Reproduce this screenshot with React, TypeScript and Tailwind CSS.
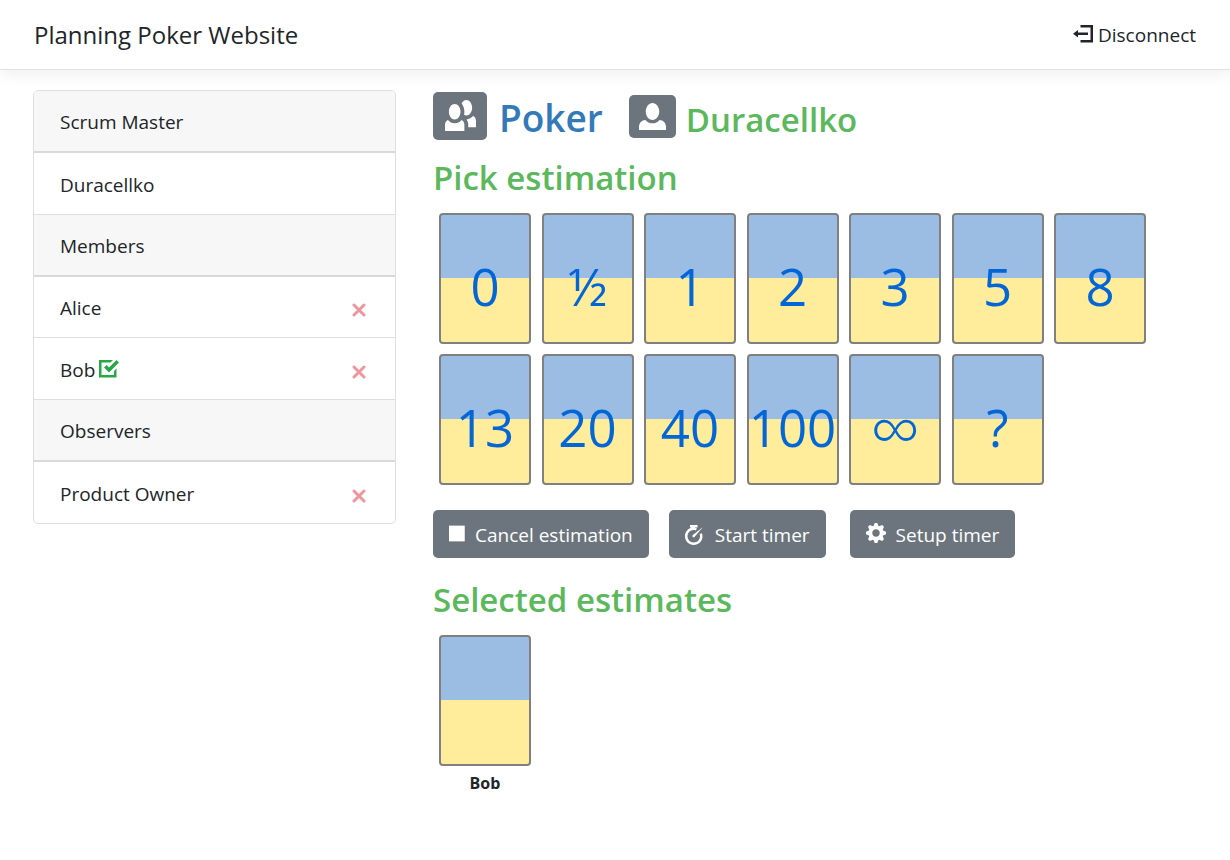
import type { ReactNode } from "react";

const ICONS = {
  logout: "M3 0v1h4v5h-4v1h5v-7h-5zm-1 2l-2 1.5 2 1.5v-1h4v-1h-4v-1z",
  people:
    "M5.5 0c-.51 0-.95.35-1.22.88.45.54.72 1.28.72 2.13 0 .29-.03.55-.09.81.19.11.38.19.59.19.83 0 1.5-.9 1.5-2s-.67-2-1.5-2zm-3 1c-.83 0-1.5.9-1.5 2s.67 2 1.5 2 1.5-.9 1.5-2-.67-2-1.5-2zm4.75 3.16c-.43.51-1.02.82-1.69.84.27.38.44.84.44 1.34v.66h2v-1.66c0-.52-.31-.97-.75-1.19zm-6.5 1c-.44.22-.75.67-.75 1.19v1.66h5v-1.66c0-.52-.31-.97-.75-1.19-.45.53-1.06.84-1.75.84s-1.3-.32-1.75-.84z",
  person:
    "M4 0c-1.1 0-2 1.12-2 2.5s.9 2.5 2 2.5 2-1.12 2-2.5-.9-2.5-2-2.5zm-2.09 5c-1.06.05-1.91.92-1.91 2v1h8v-1c0-1.08-.84-1.95-1.91-2-.54.61-1.28 1-2.09 1-.81 0-1.55-.39-2.09-1z",
  cog: "M3.5 0l-.5 1.19c-.1.03-.19.08-.28.13l-1.19-.5-.72.72.5 1.19c-.05.1-.09.18-.13.28l-1.19.5v1l1.19.5c.04.1.08.18.13.28l-.5 1.19.72.72 1.19-.5c.09.04.18.09.28.13l.5 1.19h1l.5-1.19c.09-.04.19-.08.28-.13l1.19.5.72-.72-.5-1.19c.04-.09.09-.19.13-.28l1.19-.5v-1l-1.19-.5c-.03-.09-.08-.19-.13-.28l.5-1.19-.72-.72-1.19.5c-.09-.04-.19-.09-.28-.13l-.5-1.19h-1zm.5 2.5c.83 0 1.5.67 1.5 1.5s-.67 1.5-1.5 1.5-1.5-.67-1.5-1.5.67-1.5 1.5-1.5z",
  timer:
    "M2 0v1h1v.03c-1.7.24-3 1.71-3 3.47 0 1.93 1.57 3.5 3.5 3.5s3.5-1.57 3.5-3.5c0-.45-.1-.87-.25-1.25l-.91.38c.11.29.16.57.16.88 0 1.39-1.11 2.5-2.5 2.5s-2.5-1.11-2.5-2.5 1.11-2.5 2.5-2.5c.3 0 .59.05.88.16l.34-.94c-.23-.08-.47-.12-.72-.16v-.06h1v-1h-3zm5 1s-3.65 2.81-3.88 3.03c-.19.2-.19.52 0 .72.2.2.52.2.72 0 .23-.22 3.16-3.75 3.16-3.75z",
  task: "M0 0v7h7v-3.59l-1 1v1.59h-5v-5h3.59l1-1h-5.59zm7 0l-3 3-1-1-1 1 2 2 4-4-1-1z",
  stop: "M0 1v6h6v-6h-6z",
};

function Icon({ name, className }: { name: keyof typeof ICONS; className: string }) {
  return (
    <svg viewBox="0 0 8 8" fill="currentColor" aria-hidden="true" className={className}>
      <path d={ICONS[name]} />
    </svg>
  );
}

function GroupHeader({ children }: { children: ReactNode }) {
  return (
    <h2 className="flex h-[62px] items-center border-b-2 border-[#d9d9d9] bg-[#f7f7f7] px-[26px] pt-0.5">
      {children}
    </h2>
  );
}

function Person({ name, voted, removable }: { name: string; voted?: boolean; removable?: boolean }) {
  return (
    <li className="flex h-[61px] items-center border-b border-[#dfdfdf] px-[26px] pt-0.5 last:border-b-0">
      <span>{name}</span>
      {voted && <Icon name="task" className="ml-1 size-5 text-[#28a745]" />}
      {removable && (
        <button type="button" aria-label={`Remove ${name}`} className="mt-1 ml-auto p-[3px] text-[#ed969e]">
          <svg viewBox="0 0 14 14" className="size-[14px]" aria-hidden="true">
            <path d="M2 2l10 10M12 2L2 12" stroke="currentColor" strokeWidth="3" strokeLinecap="round" />
          </svg>
        </button>
      )}
    </li>
  );
}

const CARD =
  "h-[131px] w-[92px] shrink-0 rounded border-2 border-[#808080] bg-linear-to-b from-[#9bbde3] from-50% to-[#ffed9b] to-50%";

const VALUES = ["0", "½", "1", "2", "3", "5", "8", "13", "20", "40", "100", "∞", "?"];

function ActionButton({ icon, iconClass, children }: { icon: keyof typeof ICONS; iconClass: string; children: ReactNode }) {
  return (
    <button type="button" className="flex h-12 items-center rounded-[5px] bg-[#6c757d] px-4 pt-0.5 text-white">
      <Icon name={icon} className={iconClass} />
      {children}
    </button>
  );
}

function SectionTitle({ children }: { children: ReactNode }) {
  return <h3 className="text-[33px] leading-[46px] font-semibold text-[#5cb85c]">{children}</h3>;
}

export default function App() {
  return (
    <div className="min-h-screen bg-white font-['Open_Sans','Noto_Sans',sans-serif] text-[19px] leading-[30px] text-[#212529]">
      <header className="flex h-[70px] items-center justify-between border-b border-[#dee2e6] px-[34px] shadow-[0_5px_15px_rgba(0,0,0,0.06)]">
        <h1 className="text-2xl">Planning Poker Website</h1>
        <a href="#disconnect" className="flex items-center gap-[5px]">
          <Icon name="logout" className="size-5" />
          Disconnect
        </a>
      </header>

      <div className="flex items-start gap-[37px] pt-5 pr-[34px] pl-[33px]">
        <aside className="w-[363px] shrink-0 overflow-hidden rounded-[5px] border border-[#dfdfdf]">
          <GroupHeader>Scrum Master</GroupHeader>
          <ul className="border-b border-[#dfdfdf]">
            <Person name="Duracellko" />
          </ul>
          <GroupHeader>Members</GroupHeader>
          <ul className="border-b border-[#dfdfdf]">
            <Person name="Alice" removable />
            <Person name="Bob" voted removable />
          </ul>
          <GroupHeader>Observers</GroupHeader>
          <ul>
            <Person name="Product Owner" removable />
          </ul>
        </aside>

        <main className="min-w-0 flex-1">
          <div className="flex items-center">
            <span className="flex h-12 w-[54px] items-center justify-center rounded-[5px] bg-[#6c757d] pb-0.5 text-white">
              <Icon name="people" className="size-[31px]" />
            </span>
            <h2 className="ml-3 pt-1 text-[37px] leading-[44px] font-semibold text-[#337ab7]">Poker</h2>
            <span className="ml-[26px] flex h-[43px] w-[47px] items-center justify-center rounded-[5px] bg-[#6c757d] text-white">
              <Icon name="person" className="size-[27px]" />
            </span>
            <h3 className="ml-2.5 pt-2 text-[33px] leading-[44px] font-semibold text-[#5cb85c]">Duracellko</h3>
          </div>

          <div className="mt-[13px]">
            <SectionTitle>Pick estimation</SectionTitle>
          </div>
          <ul className="mt-3 ml-1.5 grid max-w-[707px] grid-cols-[repeat(auto-fill,92px)] justify-between gap-2.5">
            {VALUES.map((value) => (
              <li key={value}>
                <button
                  type="button"
                  className={`${CARD} flex items-center justify-center pt-4 leading-none text-[#0366d6] ${
                    value === "∞" ? "text-[70px] font-light" : "text-[51px]"
                  }`}
                >
                  {value}
                </button>
              </li>
            ))}
          </ul>

          <div className="mt-[25px] flex flex-wrap gap-x-5 gap-y-3">
            <ActionButton icon="stop" iconClass="mr-[5px] mb-1 size-[21px]">Cancel estimation</ActionButton>
            <ActionButton icon="timer" iconClass="mr-2.5 size-5">Start timer</ActionButton>
            <div className="ml-1">
              <ActionButton icon="cog" iconClass="mr-2.5 mb-1 size-5">Setup timer</ActionButton>
            </div>
          </div>

          <div className="mt-[19px]">
            <SectionTitle>Selected estimates</SectionTitle>
          </div>
          <figure className="mt-3 ml-1.5 w-[92px] text-center">
            <div className={CARD} />
            <figcaption className="mt-1 text-base leading-[26px] font-bold">Bob</figcaption>
          </figure>
        </main>
      </div>
    </div>
  );
}
